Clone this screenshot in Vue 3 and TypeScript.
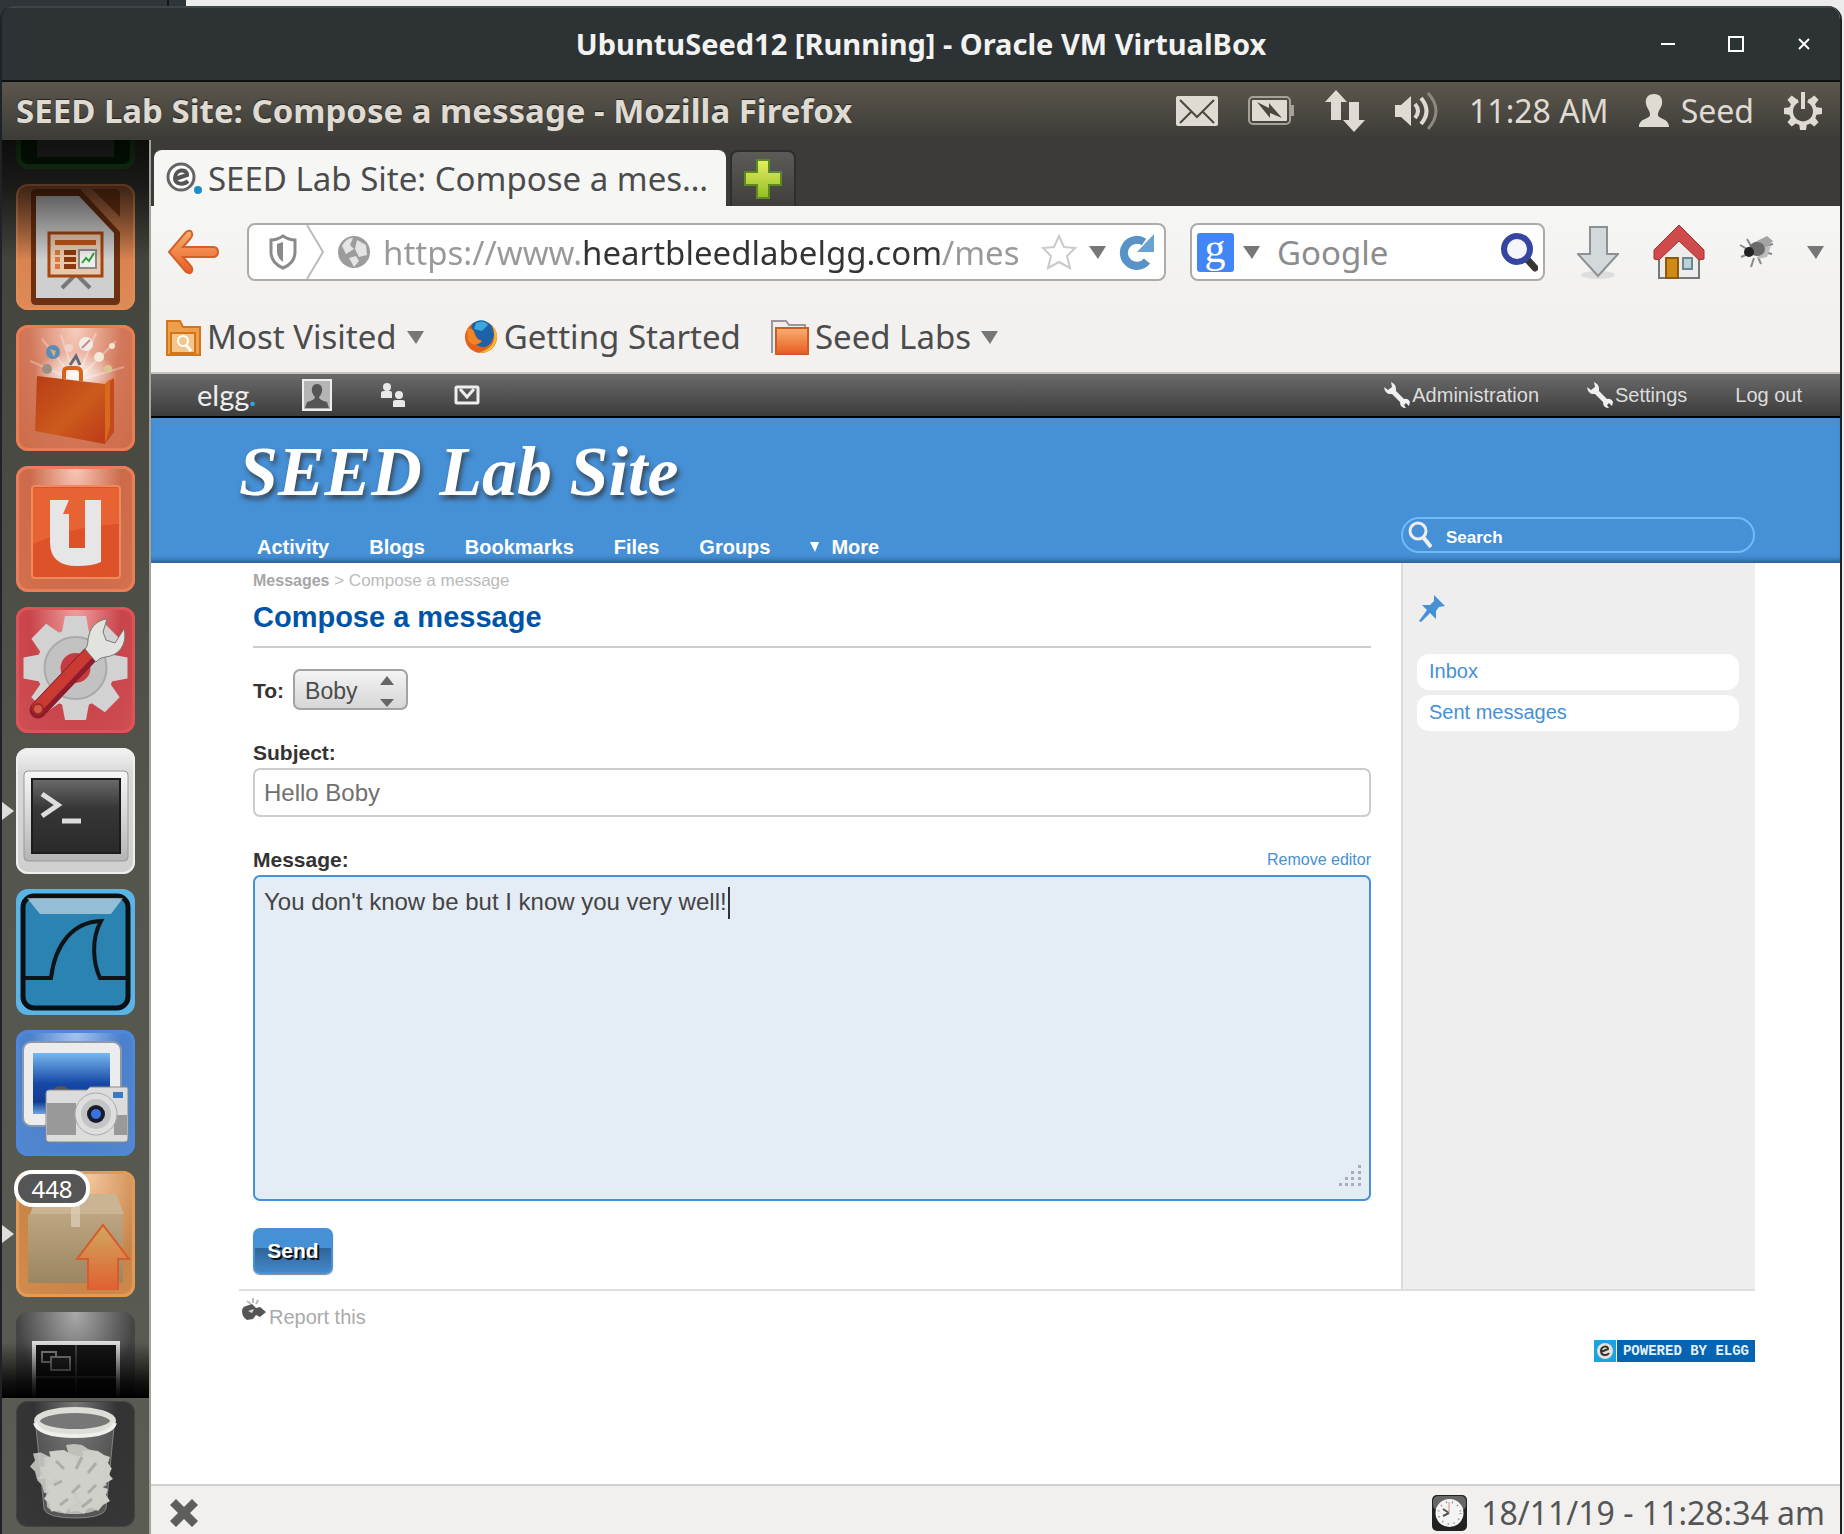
<script setup lang="ts">
import { ref } from 'vue'

const recipient = ref('Boby')
const subject = ref('Hello Boby')
const message = ref("You don't know be but I know you very well!")
const url = ref('https://www.heartbleedlabelgg.com/mes')
const webSearch = ref('')
const siteSearch = ref('')

const siteNav: string[] = ['Activity', 'Blogs', 'Bookmarks', 'Files', 'Groups']
const mailLinks: string[] = ['Inbox', 'Sent messages']
const gearAngles: number[] = [0, 45, 90, 135, 180, 225, 270, 315]
const paper: number[][] = [
  [48, 62, 13], [66, 56, 12], [82, 62, 12], [40, 78, 12], [58, 76, 14], [76, 78, 13],
  [46, 96, 13], [64, 96, 14], [80, 94, 12], [36, 66, 9], [86, 72, 9],
]
</script>

<template>
  <div class="desktop">
    <svg width="0" height="0" class="defs" aria-hidden="true">
      <defs>
        <linearGradient id="metal" x1="0" y1="0" x2="0" y2="1"><stop offset="0" stop-color="#f8f8f8" /><stop offset="1" stop-color="#b4b4b4" /></linearGradient>
        <linearGradient id="orange" x1="0" y1="0" x2="0" y2="1"><stop offset="0" stop-color="#f8b070" /><stop offset="1" stop-color="#e85c22" /></linearGradient>
        <linearGradient id="arrow" x1="0" y1="0" x2="0" y2="1"><stop offset="0" stop-color="#d0a860" /><stop offset="1" stop-color="#e06030" /></linearGradient>
        <linearGradient id="bag" x1="0" y1="0" x2="1" y2="1"><stop offset="0" stop-color="#b83d16" /><stop offset=".55" stop-color="#cc5a1c" /><stop offset="1" stop-color="#bd3a1a" /></linearGradient>
        <linearGradient id="screen" x1="0" y1="0" x2="0" y2="1"><stop offset="0" stop-color="#77b8ee" /><stop offset=".5" stop-color="#1748a6" /><stop offset=".8" stop-color="#0e3c94" /><stop offset="1" stop-color="#6fa4e0" /></linearGradient>
        <linearGradient id="term" x1="0" y1="0" x2="0" y2="1"><stop offset="0" stop-color="#6a6a6a" /><stop offset=".4" stop-color="#363636" /><stop offset="1" stop-color="#2a2a2a" /></linearGradient>
        <linearGradient id="lime" x1="0" y1="0" x2="0" y2="1"><stop offset="0" stop-color="#e6ee60" /><stop offset="1" stop-color="#93bd28" /></linearGradient>
        <linearGradient id="box" x1="0" y1="0" x2="0" y2="1"><stop offset="0" stop-color="#bda582" /><stop offset="1" stop-color="#9c8660" /></linearGradient>
        <radialGradient id="burst"><stop offset="0" stop-color="#fff" /><stop offset="1" stop-color="#fff" stop-opacity="0" /></radialGradient>
      </defs>
    </svg>

    <div class="window">
      <header class="titlebar">
        <h1>UbuntuSeed12 [Running] - Oracle VM VirtualBox</h1>
        <div class="controls">
          <button type="button" aria-label="Minimize"><svg width="16" height="16"><path d="M1 8h14" stroke="#fff" stroke-width="2" /></svg></button>
          <button type="button" aria-label="Maximize"><svg width="16" height="16"><rect x="1" y="1" width="14" height="14" fill="none" stroke="#fff" stroke-width="2" /></svg></button>
          <button type="button" aria-label="Close"><svg width="16" height="16"><path d="M3 3l10 10M13 3L3 13" stroke="#fff" stroke-width="2" /></svg></button>
        </div>
      </header>

      <div class="panel">
        <strong>SEED Lab Site: Compose a message - Mozilla Firefox</strong>
        <div class="tray">
          <svg width="42" height="30" viewBox="0 0 42 30"><rect width="42" height="30" rx="2" fill="#dfdbd2" /><path d="M4 4l17 17L38 4M4 27l12-12M38 27L26 15" fill="none" stroke="#4a473f" stroke-width="2" /></svg>
          <svg width="47" height="30" viewBox="0 0 47 30"><rect x="1" y="1" width="41" height="27" rx="4" fill="none" stroke="#a5a197" stroke-width="2" /><path d="M42 9h4v11h-4" fill="#a5a197" /><rect x="4" y="4" width="35" height="21" rx="1" fill="#dfdbd2" /><path d="M9 6l12 6v-5l13 15-12-5v5z" fill="#4a473f" /></svg>
          <svg width="40" height="42" viewBox="0 0 40 42"><path d="M11 0l11 12h-6v18H6V12H0zM29 42L18 30h6V12h10v18h6z" fill="#dfdbd2" /></svg>
          <svg width="44" height="40" viewBox="0 0 44 40"><path d="M0 14h6l10-9v30l-10-9H0z" fill="#dfdbd2" /><path d="M20 13q6 7 0 14" fill="none" stroke="#dfdbd2" stroke-width="4" /><path d="M26 7q11 13 0 26" fill="none" stroke="#dfdbd2" stroke-width="4" /><path d="M33 2q16 18 0 36" fill="none" stroke="#8d897f" stroke-width="3" /></svg>
          <span>11:28 AM</span>
          <span class="user">
            <svg width="30" height="34" viewBox="0 0 30 34"><path d="M15 0c6 0 9 4 8 10-1 5-4 6-4 11 0 4 11 3 11 12H0c0-9 11-8 11-12 0-5-3-6-4-11C6 4 9 0 15 0z" fill="#dfdbd2" /></svg>
            <span>Seed</span>
          </span>
          <svg width="38" height="38" viewBox="0 0 38 38"><g fill="#dfdbd2"><path v-for="a in gearAngles.slice(1)" :key="a" d="M16 0h6l1 7h-8z" :transform="`rotate(${a} 19 19)`" /></g><path d="M14 8.500a12 12 0 1 0 10 0" fill="none" stroke="#dfdbd2" stroke-width="4" /><path d="M19 0v17" stroke="#dfdbd2" stroke-width="4" /></svg>
        </div>
      </div>

      <div class="session">
        <aside class="launcher">
          <div class="stack">
            <div class="tile cut-top"><i></i></div>

            <button type="button" class="tile impress" aria-label="Presentation">
              <svg viewBox="0 0 119 126"><path d="M20 5h44l40 43v68q0 5-5 5H20q-5 0-5-5V10q0-5 5-5z" fill="#6d3010" /><path d="M76 5h23q5 0 5 5v23z" fill="#7a3814" /><path d="M20 12h43l35 37v65H20z" fill="#cfcfcf" /><path d="M60 90l-14 14M60 90l14 14" stroke="#777" stroke-width="4" /><rect x="33" y="49" width="53" height="43" fill="#e8c9b0" stroke="#a6460f" stroke-width="3" /><rect x="39" y="56" width="41" height="5" fill="#c0561a" /><path d="M39 66h5v5h-5zM39 73h5v5h-5zM39 80h5v5h-5z" fill="#d8783c" /><path d="M48 66h12v5H48zM48 73h12v5H48zM48 80h12v5H48z" fill="#8a3a0c" /><rect x="63" y="66" width="17" height="18" fill="#eee" stroke="#888" stroke-width="2" /><path d="M66 79l4-5 3 3 5-8" fill="none" stroke="#2fa02f" stroke-width="2" /></svg>
            </button>

            <button type="button" class="tile store" aria-label="Software Center">
              <svg viewBox="0 0 119 126"><ellipse cx="60" cy="50" rx="42" ry="24" fill="url(#burst)" /><path d="M60 56L14 36M60 56L26 14M60 56L45 10M60 56L80 8M60 56L100 16M60 56l48-14" stroke="#fff" stroke-opacity=".3" stroke-width="2" /><circle cx="37" cy="27" r="7" fill="#5a8cb8" /><path d="M34 24l6 2-2 6z" fill="#d8b070" /><circle cx="70" cy="19" r="7" fill="#f2ece8" /><path d="M66 23l8-8" stroke="#c88" stroke-width="2" /><circle cx="53" cy="23" r="4" fill="#f0d0c8" /><circle cx="83" cy="32" r="5" fill="#f4ead8" /><path d="M54 40l6-9 4 9" fill="none" stroke="#667" stroke-width="3" /><circle cx="31" cy="44" r="5" fill="#9a9088" /><circle cx="96" cy="21" r="3" fill="#f6e2d0" /><circle cx="92" cy="44" r="4" fill="#d9c690" /><path d="M21 51l68 8v60l-70-13z" fill="url(#bag)" /><path d="M89 59l9-6v54l-9 12z" fill="#c4491b" /><path d="M89 59l5-5v48l-5 17z" fill="#d8691f" /><path d="M48 54V47q0-4 4-4h8q5 0 5 5v8" fill="none" stroke="#d8641c" stroke-width="4" /></svg>
            </button>

            <button type="button" class="tile one" aria-label="Ubuntu One">
              <svg viewBox="0 0 119 126"><rect x="16" y="20" width="88" height="92" rx="3" fill="#dd5228" stroke="#f08a5c" stroke-width="2" /><path d="M17 22h86v36q-46 2-86 20z" fill="#f0703c" fill-opacity=".6" /><path d="M34 34h19l-6 14h6v34h16V34h16v62q-8 4-24 4-27 0-27-24z" fill="#e6e6e6" /></svg>
            </button>

            <button type="button" class="tile settings" aria-label="System Settings">
              <svg viewBox="0 0 119 126"><path v-for="a in gearAngles" :key="a" d="M49 9h21l3 16H46z" :transform="`rotate(${a} 59.500 61)`" fill="#d2d2d2" /><circle cx="59.500" cy="61" r="39" fill="#d2d2d2" /><circle cx="59.500" cy="61" r="31" fill="#c2c2c2" stroke="#aaa" stroke-width="2" /><circle cx="59.500" cy="61" r="15" fill="#c43c3e" /><path d="M22 103L74 48" stroke="#8e1c2c" stroke-width="17" stroke-linecap="round" /><path d="M21 101L73 46" stroke="#c93a32" stroke-width="11" stroke-linecap="round" /><circle cx="22" cy="102" r="5" fill="#d55a48" stroke="#9c2a2a" stroke-width="2" /><path d="M69 42c4-4 2-8 4-14 2-9 9-15 18-16l-4 13 3 8 9 3 9-14c3 12-2 22-11 26-7 3-12 1-17 7z" fill="#e2e2de" stroke="#777" stroke-width="1" /></svg>
            </button>

            <button type="button" class="tile terminal" aria-label="Terminal">
              <svg viewBox="0 0 119 126"><rect x="8" y="23" width="104" height="90" rx="4" fill="url(#metal)" stroke="#999" stroke-width="1" /><rect x="16" y="31" width="88" height="74" fill="url(#term)" stroke="#1c1c1c" stroke-width="2" /><path d="M26 46l16 11-16 11" fill="none" stroke="#ddd" stroke-width="5" /><path d="M46 73h19" stroke="#ddd" stroke-width="5" /></svg>
              <i class="running"></i>
            </button>

            <button type="button" class="tile shark" aria-label="Wireshark">
              <svg viewBox="0 0 119 126"><rect x="7" y="7" width="105" height="112" rx="11" fill="#2b83b2" stroke="#0b1014" stroke-width="5" /><path d="M11 9h96l-12 16H24z" fill="#d8e6ee" fill-opacity=".6" /><path d="M9 89h26c4-34 22-56 50-57-10 18-8 42-1 57h27" fill="none" stroke="#0f1417" stroke-width="4" /></svg>
            </button>

            <button type="button" class="tile shot" aria-label="Screenshot">
              <svg viewBox="0 0 119 126"><rect x="7" y="12" width="98" height="84" rx="8" fill="#ececec" stroke="#8a97ac" stroke-width="2" /><rect x="17" y="23" width="77" height="61" fill="url(#screen)" /><ellipse cx="45" cy="59" rx="7" ry="3" fill="#555" /><path d="M33 60h38l3-3h37q1 1 1 3v49q0 3-3 3H33q-3 0-3-3V63q0-3 3-3z" fill="#dcdcdc" stroke="#888" stroke-width="1" /><path d="M31 73h29v32H31zM98 85h13v20H98z" fill="#999" /><circle cx="80" cy="84" r="21" fill="#dedede" stroke="#aaa" stroke-width="1" /><circle cx="80" cy="84" r="15" fill="#c4c4c4" /><circle cx="80" cy="84" r="9" fill="#181c28" /><circle cx="80" cy="84" r="5" fill="#3a72e0" /><rect x="97" y="62" width="10" height="6" fill="#3d78c4" /></svg>
            </button>

            <button type="button" class="tile update" aria-label="Software Updater">
              <svg viewBox="0 0 119 126"><path d="M22 23h78l8 20H14z" fill="#cbb493" /><rect x="12" y="43" width="95" height="69" rx="2" fill="url(#box)" /><path d="M55 23h9v33h-9z" fill="#ddd0b8" fill-opacity=".7" /><path d="M72 119V88H61l26-34 26 34h-11v31" fill="url(#arrow)" stroke="#d95a2c" stroke-width="2" /></svg>
              <b class="count">448</b>
              <i class="running"></i>
            </button>

            <button type="button" class="tile cut-bottom" aria-label="Workspace Switcher">
              <svg viewBox="0 0 119 86"><path d="M18 86V31h84v55" fill="#161616" stroke="#ddd" stroke-width="4" /><path d="M60 33v53M20 65h80" stroke="#444" stroke-width="2" /><path d="M26 40h14v10H26z" fill="none" stroke="#888" stroke-width="2" /><path d="M35 45h19v13H35z" fill="#222" stroke="#888" stroke-width="2" /></svg>
            </button>
          </div>

          <button type="button" class="tile trash" aria-label="Trash">
            <svg viewBox="0 0 119 126"><path d="M20 26l8 82q3 9 31 9t31-9l8-82z" fill="#8a8a8a" fill-opacity=".4" stroke="#aaa" stroke-opacity=".6" /><g fill="#cfcfca"><path v-for="(p, i) in paper" :key="i" :d="`M${p[0]} ${p[1] - p[2]}l${p[2] / 2} 4 ${p[2] / 2} 2-2 ${p[2] / 2} 4 ${p[2] / 2}-7 4-5 ${p[2] / 2}-6-3-8 1-2-8-5-5 5-6-2-7 8-1z`" :opacity="i % 2 ? 0.85 : 1" /><path d="M28 56l60-2 0 10-4 42q-6 7-26 7t-27-7z" opacity=".8" /></g><path d="M40 60l8 8M66 56l-6 12M80 62l-8 10M38 84l8-4M56 92l8-8M80 84l-8 8M44 104l8-6M66 106l10-8" fill="none" stroke="#adada8" stroke-width="3" /><ellipse cx="59" cy="20" rx="38" ry="11" fill="#777" stroke="#deded9" stroke-width="6" /><path d="M19 22q4 13 40 13t40-13" fill="none" stroke="#efefec" stroke-width="4" /></svg>
          </button>
        </aside>

        <div class="browser">
          <div class="tabs">
            <a href="#" class="tab">
              <svg width="38" height="36" viewBox="0 0 38 36"><circle cx="16" cy="16" r="13" fill="#fff" stroke="#666" stroke-width="3" /><path d="M10 18l12-4c0-7-12-6-12 3 0 7 9 7 13 3" fill="none" stroke="#555" stroke-width="4" /><circle cx="33" cy="29" r="4" fill="#1d8fc8" /></svg>
              <span>SEED Lab Site: Compose a mes…</span>
            </a>
            <button type="button" class="newtab" aria-label="New tab"><svg width="38" height="40" viewBox="0 0 38 40"><path d="M13 1h12v12h12v13H25v13H13V26H1V13h12z" fill="url(#lime)" stroke="#5c8a1c" stroke-width="2" /></svg></button>
          </div>

          <div class="navbar">
            <button type="button" class="back" aria-label="Back"><svg width="52" height="46" viewBox="0 0 52 46"><path d="M2 23L19 3q5-3 6 1 1 3-2 6l-7 8h31q4 1 4 5t-4 5H16l7 8q3 3 2 6-1 4-6 1z" fill="url(#orange)" stroke="#d2602a" stroke-width="2" /></svg></button>
            <div class="urlbar">
              <svg class="shield" width="28" height="36" viewBox="0 0 28 36"><path d="M14 2q6 4 12 4v12q0 11-12 16Q2 29 2 18V6q6 0 12-4z" fill="#fff" stroke="#8a8a8a" stroke-width="3" /><path d="M14 8v20q-6-4-6-11v-7z" fill="#8a8a8a" /></svg>
              <svg class="chev" width="20" height="54" viewBox="0 0 20 54"><path d="M2 0l16 27L2 54" fill="none" stroke="#bbb" stroke-width="2" /></svg>
              <svg width="34" height="36" viewBox="0 0 34 36"><circle cx="17" cy="18" r="16" fill="#9c9c9c" /><path d="M5 12q5-9 11-8l-3 7 4 4-8 5zM20 6l9 5 1 10-8 2-4-8zM12 24l7-2 3 5-5 6z" fill="#e4e4e4" /></svg>
              <input v-model="url" class="address" type="text" aria-label="Address" />
              <svg width="36" height="36" viewBox="0 0 36 36"><path d="M18 2l5 11 11 1-8 8 3 12-11-6-11 6 3-12-8-8 11-1z" fill="#fff" stroke="#cacaca" stroke-width="2" /></svg>
              <svg width="17" height="13" viewBox="0 0 17 13"><path d="M0 0h17l-8 13z" fill="#777" /></svg>
              <svg width="36" height="38" viewBox="0 0 36 38"><path d="M29 28A13 13 0 1 1 26 9" fill="none" stroke="#5893c8" stroke-width="8" /><path d="M36 1v18H19z" fill="#6aa2d4" /></svg>
            </div>
            <div class="searchbar">
              <svg width="37" height="39" viewBox="0 0 37 39"><rect width="37" height="39" rx="3" fill="#4285f4" /><text x="18" y="29" text-anchor="middle" font-family="Liberation Serif, serif" font-size="42" fill="#fff">g</text></svg>
              <svg width="17" height="13" viewBox="0 0 17 13"><path d="M0 0h17l-8 13z" fill="#777" /></svg>
              <input v-model="webSearch" type="text" placeholder="Google" aria-label="Search the web" />
              <svg width="38" height="40" viewBox="0 0 38 40"><path d="M26 26l9 10" stroke="#3a3632" stroke-width="7" stroke-linecap="round" /><circle cx="17" cy="17" r="13" fill="#f4f6fc" stroke="#3546a0" stroke-width="6" /></svg>
            </div>
            <button type="button" aria-label="Downloads"><svg width="42" height="54" viewBox="0 0 42 54"><ellipse cx="21" cy="50" rx="17" ry="4" fill="#ddd" /><path d="M13 2h17v27h11L21 51 1 29h12z" fill="#d3d9db" stroke="#8c9294" stroke-width="2" /></svg></button>
            <button type="button" aria-label="Home"><svg width="52" height="56" viewBox="0 0 52 56"><path d="M6 28L26 8l20 20v26H6z" fill="#ececec" stroke="#777" stroke-width="2" /><path d="M26 1l25 25v9l-5 1-20-19L6 36l-5-1v-9z" fill="#cf4a4a" stroke="#a82c2c" stroke-width="1" /><rect x="13" y="34" width="12" height="20" fill="#d08a16" stroke="#8c5a0c" stroke-width="2" /><rect x="30" y="34" width="9" height="11" fill="#b8d4da" stroke="#6c868c" stroke-width="2" /></svg></button>
            <button type="button" aria-label="Firebug"><svg width="36" height="34" viewBox="0 0 36 34"><path d="M1 10l7 4M2 22l7-3M8 4l4 7M12 32l3-9M22 29l-3-7M33 19l-8-2M34 9l-8 2" stroke="#888" stroke-width="2" /><path d="M14 8L28 1l6 5-12 13z" fill="#a4a4a4" /><path d="M18 14l14-3-4 11-9 2z" fill="#bdbdbd" /><ellipse cx="18" cy="14" rx="8" ry="7" fill="#6a6a6a" /><circle cx="10" cy="17" r="5" fill="#222" /></svg></button>
            <svg class="more" width="17" height="13" viewBox="0 0 17 13"><path d="M0 0h17l-8 13z" fill="#777" /></svg>
          </div>

          <nav class="bookmarks">
            <a href="#">
              <svg width="36" height="38" viewBox="0 0 36 38"><path d="M2 3h13l3 6h17v28H2z" fill="#eda04c" stroke="#d4751c" stroke-width="2" /><path d="M6 15h24v20H6z" fill="#f5c68c" stroke="#d4751c" stroke-width="2" /><circle cx="18" cy="23" r="5" fill="none" stroke="#fff" stroke-width="2" /><path d="M21 27l5 6" stroke="#fff" stroke-width="3" /></svg>
              <span>Most Visited</span>
              <svg class="caret" width="17" height="13" viewBox="0 0 17 13"><path d="M0 0h17l-8 13z" fill="#777" /></svg>
            </a>
            <a href="#">
              <svg width="34" height="36" viewBox="0 0 34 36"><circle cx="17" cy="18" r="16" fill="#e2611c" /><path d="M8 5Q18-3 27 6q6 8 0 18-8 8-15 1 4 0 6-3-6-2-7-8-5-2-3-9z" fill="#1c62a8" /><path d="M12 4q8-4 12 2l-6 6-8-2z" fill="#3da6dc" /><path d="M28 6q7 8 4 17-5 12-17 11 14-5 15-14 1-7-2-14z" fill="#f6b92c" /><path d="M3 10q4-2 7 2 0 8 8 10-8 8-14-1z" fill="#f08424" /></svg>
              <span>Getting Started</span>
            </a>
            <a href="#">
              <svg width="38" height="36" viewBox="0 0 38 36"><path d="M1 34V2h14l3 4h16v8" fill="#eee" stroke="#999" stroke-width="2" /><rect x="5" y="9" width="32" height="26" fill="url(#orange)" stroke="#d35a28" stroke-width="2" /></svg>
              <span>Seed Labs</span>
              <svg class="caret" width="17" height="13" viewBox="0 0 17 13"><path d="M0 0h17l-8 13z" fill="#777" /></svg>
            </a>
          </nav>

          <div class="page">
            <div class="topbar">
              <a href="#" class="logo">elgg<b>.</b></a>
              <a href="#" aria-label="Profile"><svg width="30" height="32" viewBox="0 0 30 32"><rect x="1" y="1" width="28" height="30" fill="#b5b5b5" stroke="#eee" stroke-width="2" /><path d="M15 5q6 0 5 8-1 3-3 5 0 3 8 5l2 6H3l2-6q8-2 8-5-2-2-3-5-1-8 5-8z" fill="#555" /></svg></a>
              <a href="#" aria-label="Friends"><svg width="26" height="26" viewBox="0 0 26 26"><circle cx="7" cy="5" r="4" fill="#e8e8e8" /><path d="M1 16v-5q0-2 3-2h6q2 0 2 2v5z" fill="#e8e8e8" /><circle cx="19" cy="13" r="4" fill="#e8e8e8" /><path d="M13 25v-5q0-2 3-2h6q3 0 3 2v5z" fill="#e8e8e8" /></svg></a>
              <a href="#" aria-label="Messages"><svg width="26" height="20" viewBox="0 0 26 20"><rect x="2" y="2" width="22" height="16" rx="1" fill="none" stroke="#eee" stroke-width="3" /><path d="M6 4l7 8 7-8" fill="none" stroke="#eee" stroke-width="3" /></svg></a>
              <span class="grow"></span>
              <a href="#" class="tool"><svg width="26" height="26" viewBox="0 0 26 26"><path d="M7 0q5 2 5 7v2l8 8q4-1 6 3l-1 4-3-3-2 2 2 3q-6 0-6-6L8 12Q1 13 0 5l4 3 4-3z" fill="#f0f0f0" /></svg>Administration</a>
              <a href="#" class="tool"><svg width="26" height="26" viewBox="0 0 26 26"><path d="M7 0q5 2 5 7v2l8 8q4-1 6 3l-1 4-3-3-2 2 2 3q-6 0-6-6L8 12Q1 13 0 5l4 3 4-3z" fill="#f0f0f0" /></svg>Settings</a>
              <a href="#" class="tool">Log out</a>
            </div>

            <div class="site-header">
              <a href="#" class="site-title">SEED Lab Site</a>
              <div class="site-row">
                <nav class="site-nav">
                  <a v-for="item in siteNav" :key="item" href="#">{{ item }}</a>
                  <a href="#" class="drop"><svg width="9" height="10" viewBox="0 0 9 10"><path d="M0 0h9L5 10z" fill="#fff" /></svg>More</a>
                </nav>
                <label class="site-search">
                  <svg width="24" height="30" viewBox="0 0 24 30"><circle cx="10" cy="11" r="8" fill="none" stroke="#eee" stroke-width="3" /><path d="M15 17l8 10" stroke="#eee" stroke-width="4" /></svg>
                  <input v-model="siteSearch" type="text" placeholder="Search" aria-label="Search" />
                </label>
              </div>
            </div>

            <div class="columns">
              <main>
                <p class="crumbs"><a href="#">Messages</a> &gt; Compose a message</p>
                <h2>Compose a message</h2>
                <form @submit.prevent>
                  <div class="to">
                    <label for="to">To:</label>
                    <span class="pick">
                      <select id="to" v-model="recipient"><option>Boby</option></select>
                      <svg width="14" height="32" viewBox="0 0 14 32"><path d="M0 9l7-9 7 9zM0 23h14l-7 8z" fill="#666" /></svg>
                    </span>
                  </div>
                  <div class="field">
                    <label for="subject">Subject:</label>
                    <input id="subject" v-model="subject" type="text" />
                  </div>
                  <div class="field">
                    <div class="label-row">
                      <label for="message">Message:</label>
                      <a href="#">Remove editor</a>
                    </div>
                    <div class="editor">
                      <textarea id="message" v-model="message"></textarea>
                      <i class="cursor"></i>
                      <svg class="grip" width="24" height="24" viewBox="0 0 24 24"><path d="M20 1h3v3h-3zM13 7h3v3h-3zM20 7h3v3h-3zM7 13h3v3H7zM13 13h3v3h-3zM20 13h3v3h-3zM1 19h3v3H1zM7 19h3v3H7zM13 19h3v3h-3zM20 19h3v3h-3z" fill="#a9adb5" /></svg>
                    </div>
                  </div>
                  <button type="submit" class="send">Send</button>
                </form>
              </main>
              <aside class="side">
                <svg width="26" height="27" viewBox="0 0 26 27"><path d="M15 0l11 11-6 1-3 4v8l-6-6-9 9-2-1 8-11-5-5h8l4-4z" fill="#4690d6" /></svg>
                <a v-for="item in mailLinks" :key="item" href="#">{{ item }}</a>
              </aside>
            </div>

            <div class="footer">
              <a href="#" class="report"><svg width="26" height="22" viewBox="0 0 26 22"><path d="M6 3l4 3M12 0v5M17 2l-2 4" stroke="#bbb" stroke-width="2" /><path d="M1 13q0-4 4-5l6-2 4 4 4-1 6 5-6 5-4-2-3 4-6 1q-5-3-5-9z" fill="#555" /><path d="M7 13l6-2-2 4z" fill="#ddd" /></svg>Report this</a>
              <a href="#" class="powered"><svg width="22" height="22" viewBox="0 0 22 22"><rect width="22" height="22" fill="#1ba3e0" /><circle cx="11" cy="11" r="8" fill="#e8e0d8" /><path d="M7 12l7-3c0-4-7-3-7 2 0 5 6 5 8 2" fill="none" stroke="#333" stroke-width="2" /></svg><span>POWERED BY ELGG</span></a>
            </div>
          </div>

          <div class="statusbar">
            <button type="button" aria-label="Close bar"><svg width="30" height="30" viewBox="0 0 30 30"><path d="M7 1l8 8 8-8 6 6-8 8 8 8-6 6-8-8-8 8-6-6 8-8-8-8z" fill="#5e5f5c" /></svg></button>
            <span class="clock">
              <svg width="35" height="36" viewBox="0 0 35 36"><rect width="35" height="36" rx="5" fill="#222" /><rect x="1" y="1" width="33" height="14" rx="5" fill="#666" /><circle cx="17.500" cy="18" r="14" fill="#f4f4f4" /><circle cx="17.500" cy="18" r="11" fill="none" stroke="#888" stroke-width="2" stroke-dasharray="1 5" /><path d="M17 18l-6-4M17 18l-6 3" stroke="#555" stroke-width="2" /><path d="M17 18V7" stroke="#d88" stroke-width="1" /></svg>
              <span>18/11/19 - 11:28:34 am</span>
            </span>
          </div>
        </div>
      </div>
    </div>
  </div>
</template>

<style>
body {
  background: #ececec;
}
</style>

<style scoped>
* {
  box-sizing: border-box;
}
a {
  color: inherit;
  text-decoration: none;
}
button {
  display: block;
  padding: 0;
  border: 0;
  background: none;
  font: inherit;
}
svg {
  display: block;
  flex: none;
}
input {
  min-width: 0;
  padding: 0;
  border: 0;
  outline: 0;
  background: none;
  font: inherit;
}
.defs {
  position: absolute;
}
.desktop {
  display: flex;
  flex-direction: column;
  min-height: 100vh;
  padding: 6px 2px 0 0;
  background:
    linear-gradient(#2f3539, #2f3539) 0 0 / 167px 30px no-repeat,
    linear-gradient(#14181a, #14181a) 167px 0 / 2px 30px no-repeat,
    linear-gradient(#2f3539, #2f3539) 169px 0 / 17px 30px no-repeat,
    #ececec;
  font-family: "Noto Sans", "Open Sans", sans-serif;
}
.window {
  display: flex;
  flex: 1;
  flex-direction: column;
  overflow: hidden;
  border: solid #1c2428;
  border-width: 0 2px;
  border-radius: 14px 14px 0 0;
}
.titlebar {
  display: grid;
  grid-template-columns: 1fr auto 1fr;
  align-items: center;
  height: 76px;
  border-top: 2px solid #3f4648;
  border-bottom: 2px solid #0d0f10;
  background: #2d3235;
  color: #f2f2f0;
}
.titlebar h1 {
  grid-column: 2;
  margin: 0;
  font-size: 29px;
  line-height: 36px;
}
.controls {
  display: flex;
  justify-content: flex-end;
  padding-right: 2px;
}
.controls button {
  display: grid;
  place-items: center;
  width: 68px;
  height: 40px;
}
.panel {
  display: flex;
  align-items: center;
  justify-content: space-between;
  height: 58px;
  padding: 0 18px 0 14px;
  background: linear-gradient(#5c574d, #3c3b37);
  color: #dfdbd2;
  font-size: 32px;
  line-height: 40px;
  white-space: nowrap;
}
.panel strong {
  font-size: 33px;
  text-shadow: 0 -1px 1px #222;
}
.tray {
  display: flex;
  align-items: center;
  gap: 30px;
}
.user {
  display: flex;
  align-items: center;
  gap: 12px;
}
.session {
  display: flex;
  flex: 1;
}

/* Launcher */
.launcher {
  display: flex;
  flex: none;
  flex-direction: column;
  width: 149px;
  padding-bottom: 7px;
  border-right: 2px solid #a3a497;
  background: linear-gradient(#40413a, #54554c 50%, #5b5c54);
}
.stack {
  position: relative;
  display: flex;
  flex: 1;
  flex-direction: column;
  gap: 15px;
  padding-left: 14px;
}
.stack::before,
.stack::after {
  content: "";
  position: absolute;
  z-index: 1;
  right: 0;
  left: 0;
  pointer-events: none;
}
.stack::before {
  top: 0;
  height: 120px;
  background: linear-gradient(#000000cc, #00000099 40%, #00000000);
}
.stack::after {
  bottom: 0;
  height: 56px;
  background: linear-gradient(#00000000, #000000cc 70%, #000);
}
.tile {
  position: relative;
  flex: none;
  width: 119px;
  height: 126px;
  border-radius: 12px;
}
.tile svg {
  width: 100%;
  height: 100%;
}
.cut-top {
  height: 29px;
  padding: 0 16px;
  border: 5px solid #2c7a2c;
  border-top: 0;
  border-radius: 0 0 12px 12px;
  background: #0a300a;
}
.cut-top i {
  display: block;
  height: 17px;
  background: #555;
}
.impress { background: linear-gradient(#a05c38, #d98450 60%, #de8a58); box-shadow: inset 0 0 0 2px #e48c54; }
.store { background: radial-gradient(ellipse at 50% 0, #f8d0c0, #d2785a 55%, #cc6a48); box-shadow: inset 0 0 0 3px #ea7e52; }
.one { background: radial-gradient(ellipse at 50% 0, #f8c8b8, #cc6a4a 55%, #d4724e); box-shadow: inset 0 0 0 3px #ea7e58; }
.settings { background: radial-gradient(ellipse at 50% 0, #f0a0a0, #c8444a 55%, #d05054); box-shadow: inset 0 0 0 3px #dc5358; }
.terminal { background: linear-gradient(#f4f4f4, #d8d8d8 20%, #cfcfcf); box-shadow: inset 0 0 0 2px #eee; }
.shark { background: #5ab4e4; }
.shot { background: radial-gradient(ellipse at 50% 0, #a8c4ee, #4a80cc 55%, #5488d0); box-shadow: inset 0 0 0 3px #4e88da; }
.update { background: radial-gradient(ellipse at 60% 0, #f6c8a0, #c88448 60%, #d48c4c); box-shadow: inset 0 0 0 3px #e29a54; }
.cut-bottom {
  height: 86px;
  border-radius: 12px 12px 0 0;
  background: radial-gradient(ellipse at 50% 0, #aaa, #444 70%);
}
.trash {
  margin: 3px 0 0 14px;
  background: radial-gradient(ellipse at 50% 0, #777, #333 50%, #383838);
  box-shadow: inset 0 0 0 1px #444;
}
.running {
  position: absolute;
  top: 54px;
  left: -14px;
  border: solid transparent;
  border-width: 9px 0 9px 12px;
  border-left-color: #ddd;
}
.count {
  position: absolute;
  top: -1px;
  left: -2px;
  width: 76px;
  height: 37px;
  border: 4px solid #fff;
  border-radius: 18px;
  background: #555;
  color: #fff;
  font-size: 24px;
  font-weight: 400;
  line-height: 29px;
  text-align: center;
}

/* Firefox chrome */
.browser {
  display: flex;
  flex: 1;
  flex-direction: column;
  min-width: 0;
}
.tabs {
  display: flex;
  gap: 4px;
  height: 66px;
  padding: 10px 3px 0;
  background: #3c3b37;
}
.tab {
  display: flex;
  align-items: center;
  gap: 5px;
  width: 572px;
  padding: 2px 11px 0;
  border-radius: 8px 8px 0 0;
  background: #f6f6f5;
  color: #4c4c4c;
  font-size: 33px;
  line-height: 40px;
  white-space: nowrap;
}
.newtab {
  display: grid;
  place-items: center;
  width: 66px;
  border: 2px solid #2f2e2b;
  border-bottom: 0;
  border-radius: 8px 8px 0 0;
  background: linear-gradient(#5c5b57, #3f3e3a);
}
.navbar {
  display: flex;
  align-items: center;
  height: 92px;
  padding: 0 16px;
  background: linear-gradient(#f6f6f5, #f2f1ef);
}
.urlbar,
.searchbar {
  display: flex;
  align-items: center;
  height: 58px;
  border: 2px solid #aeaaa5;
  border-radius: 8px;
  background: #fff;
  color: #8c8c8c;
  font-size: 33px;
}
.urlbar {
  flex: 1;
  gap: 12px;
  margin: 0 24px 0 28px;
  padding: 0 10px 0 20px;
}
.chev {
  margin-left: -4px;
}
.address {
  flex: 1;
  height: 50px;
  background: linear-gradient(90deg, #999 200px, #333 200px 560px, #999 560px);
  background-clip: text;
  -webkit-text-fill-color: transparent;
}
.searchbar {
  gap: 9px;
  width: 355px;
  margin-right: 32px;
  padding: 0 5px;
}
.searchbar input {
  flex: 1;
  padding-left: 8px;
}
.searchbar input::placeholder {
  color: #8c8c8c;
}
.navbar > button + button {
  margin-left: 34px;
}
.more {
  margin-left: 32px;
}
.bookmarks {
  display: flex;
  align-items: center;
  gap: 30px;
  height: 76px;
  padding: 4px 14px 0;
  border-bottom: 2px solid #c4c3c1;
  background: #f2f1ef;
  color: #4c4c4c;
  font-size: 33px;
  line-height: 40px;
  white-space: nowrap;
}
.bookmarks a {
  display: flex;
  align-items: center;
  gap: 6px;
}
.caret {
  margin: 0 10px 0 4px;
}

/* Elgg page */
.page {
  flex: 1;
  background: #fff;
  font-family: "Liberation Sans", Arial, sans-serif;
  font-size: 20px;
  line-height: 24px;
}
.topbar {
  display: flex;
  align-items: center;
  gap: 48px;
  height: 44px;
  padding: 0 38px 0 46px;
  border-bottom: 2px solid #000;
  background: linear-gradient(#6a6a6a, #3c3c3c);
  color: #ddd;
}
.logo {
  width: 57px;
  color: #eee;
  font-family: Lato, sans-serif;
  font-size: 29px;
  line-height: 30px;
}
.logo b {
  color: #2ba6e0;
}
.grow {
  flex: 1;
}
.tool {
  display: flex;
  align-items: center;
  gap: 2px;
}
.site-header {
  padding: 14px 85px 0 88px;
  background: #4690d6;
  box-shadow: inset 0 -6px 5px -3px #2a5f96;
  color: #fff;
}
.site-title {
  display: block;
  font: italic bold 70px/80px "Liberation Serif", "Times New Roman", serif;
  text-shadow: 2px 4px 5px #333c;
}
.site-row {
  display: flex;
  align-items: flex-end;
  justify-content: space-between;
  height: 51px;
}
.site-nav {
  display: flex;
  gap: 40px;
  padding: 0 0 4px 18px;
  font-weight: 700;
}
.drop {
  display: flex;
  align-items: center;
  gap: 12px;
}
.site-search {
  display: flex;
  align-items: center;
  gap: 14px;
  width: 354px;
  height: 36px;
  margin-bottom: 10px;
  padding: 0 5px;
  border: 2px solid #71b9f7;
  border-radius: 18px;
  font-size: 17px;
  font-weight: 700;
}
.site-search input {
  flex: 1;
  padding-top: 5px;
  color: #fff;
}
.site-search input::placeholder {
  color: #fff;
}
.columns {
  display: flex;
  margin: 0 85px 0 88px;
  border-bottom: 2px solid #dedede;
}
main {
  flex: 1;
  padding: 8px 30px 15px 14px;
}
.crumbs {
  margin: 0;
  color: #bababa;
  font-size: 17px;
  line-height: 20px;
}
.crumbs a {
  color: #a6a6a6;
  font-size: 16px;
  font-weight: 700;
}
h2 {
  margin: 8px 0 21px;
  padding-bottom: 11px;
  border-bottom: 2px solid #ccc;
  color: #0054a7;
  font-size: 29px;
  line-height: 36px;
}
.to {
  display: flex;
  align-items: center;
  gap: 9px;
}
label {
  color: #333;
  font-size: 21px;
  font-weight: 700;
}
.to label {
  padding-top: 3px;
}
.pick {
  position: relative;
}
.pick svg {
  position: absolute;
  top: 7px;
  right: 14px;
  pointer-events: none;
}
select {
  display: block;
  width: 115px;
  height: 41px;
  padding: 3px 10px 0;
  border: 2px solid #a3a3a3;
  border-radius: 7px;
  background: linear-gradient(#f4f4f4, #d6d6d6);
  appearance: none;
  color: #4c4c4c;
  font: 23px "Liberation Sans", Arial, sans-serif;
}
.field {
  display: flex;
  flex-direction: column;
  gap: 3px;
  margin-top: 31px;
}
.field > input {
  height: 49px;
  padding: 0 9px;
  border: 2px solid #ccc;
  border-radius: 7px;
  color: #707070;
  font-size: 24px;
}
.label-row {
  display: flex;
  justify-content: space-between;
}
.label-row a {
  color: #4690d6;
  font-size: 16px;
}
.editor {
  position: relative;
}
textarea {
  display: block;
  width: 100%;
  height: 326px;
  padding: 10px 9px;
  border: 2px solid #4690d6;
  border-radius: 7px;
  outline: 0;
  background: #e4ecf5;
  color: #444;
  font: 24px/30px "Liberation Sans", Arial, sans-serif;
  resize: none;
}
.cursor {
  position: absolute;
  top: 12px;
  left: 475px;
  width: 2px;
  height: 32px;
  background: #333;
}
.grip {
  position: absolute;
  right: 9px;
  bottom: 13px;
}
.send {
  width: 80px;
  height: 46px;
  margin-top: 27px;
  border: 2px solid #4690d6;
  border-radius: 7px;
  background: linear-gradient(#4690d6 42%, #2f6499 42%, #4387c8);
  box-shadow: 0 1px 1px #888;
  color: #fff;
  font-size: 21px;
  font-weight: 700;
  text-shadow: 2px 2px 0 #111;
}
.side {
  display: flex;
  flex-direction: column;
  gap: 5px;
  width: 354px;
  padding: 32px 16px 0 14px;
  border-left: 2px solid #dcdcdc;
  background: #eee;
  color: #4690d6;
}
.side svg {
  margin: 0 2px 27px;
}
.side a {
  height: 36px;
  padding: 5px 12px;
  border-radius: 12px;
  background: #fff;
}
.footer {
  display: flex;
  flex-direction: column;
  gap: 11px;
  padding: 14px 85px 0 90px;
}
.report {
  display: flex;
  gap: 2px;
  color: #aaa;
}
.report svg {
  margin-top: -7px;
}
.powered {
  display: flex;
  align-self: flex-end;
  gap: 1px;
  font: bold 14px/22px "Liberation Mono", monospace;
}
.powered span {
  padding: 0 6px;
  background: #0464b4;
  color: #e4f0fa;
}
.statusbar {
  display: flex;
  align-items: center;
  justify-content: space-between;
  height: 50px;
  padding: 6px 15px 0 18px;
  border-top: 2px solid #d2d1cf;
  background: #f1f0ee;
}
.clock {
  display: flex;
  align-items: center;
  gap: 14px;
  color: #555;
  font-size: 32px;
  line-height: 40px;
}
</style>
